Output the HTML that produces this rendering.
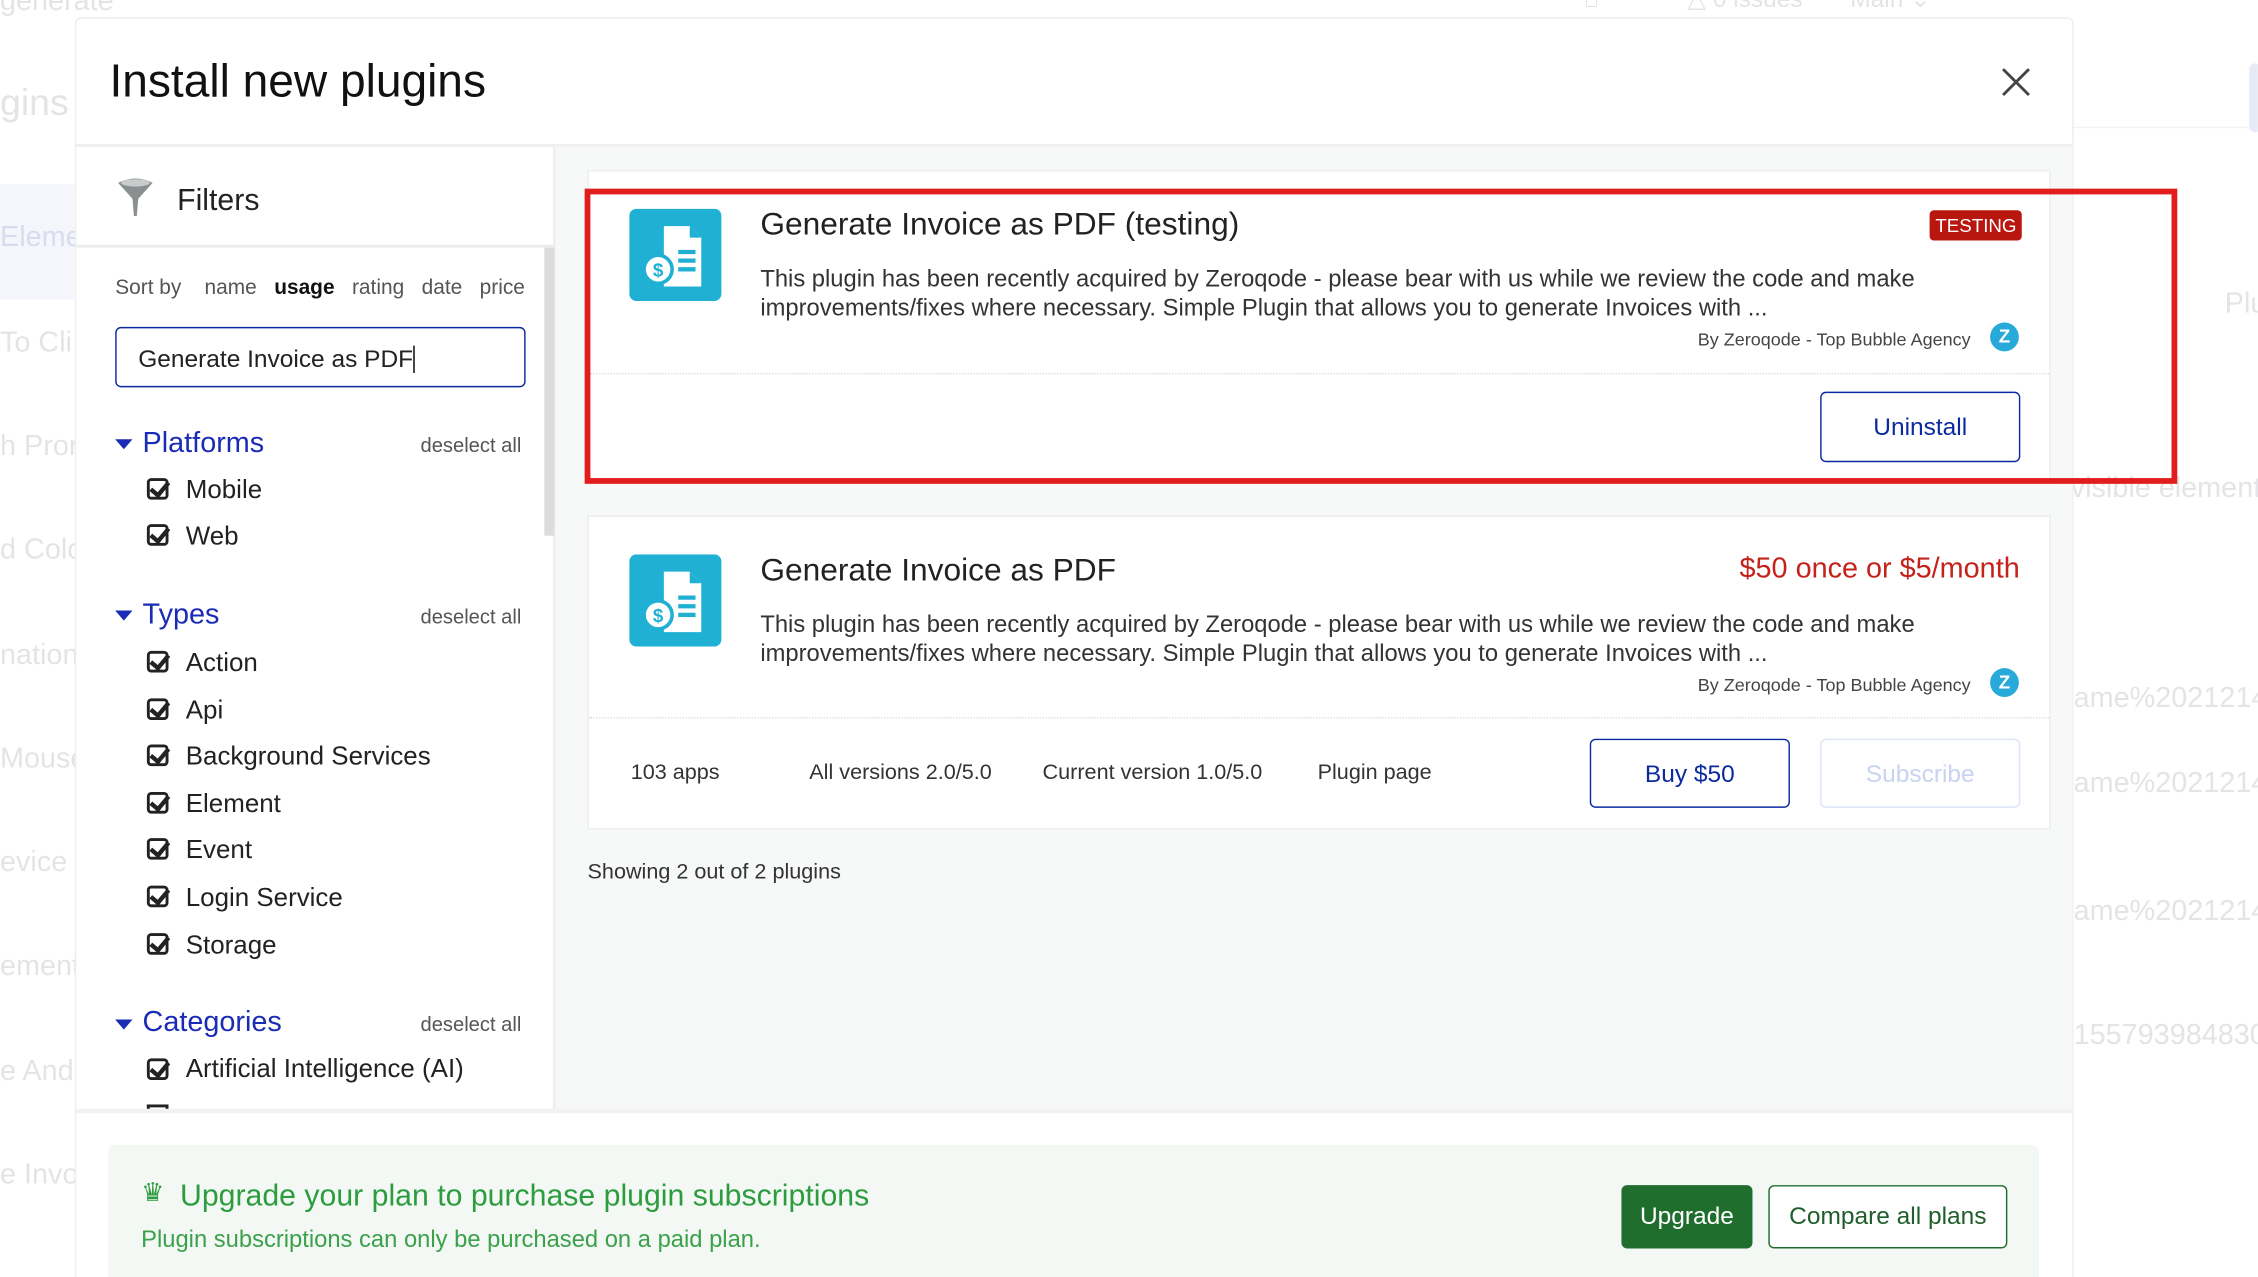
<!DOCTYPE html>
<html><head><meta charset="utf-8"><style>
*{box-sizing:border-box;margin:0;padding:0}
html,body{width:2258px;height:1276px;overflow:hidden;background:#fff;font-family:"Liberation Sans","DejaVu Sans",sans-serif}
#s{position:absolute;left:0;top:0;width:1568px;height:887px;transform:scale(1.44);transform-origin:0 0;overflow:hidden;background:#fff}
.a{position:absolute;white-space:nowrap}
.ghost{color:#e4e4e6;font-size:20px}
.chk{position:absolute;width:15px;height:15px;border:2px solid #222;border-radius:3px}
.chk:after{content:"";position:absolute;left:3px;top:-2px;width:5px;height:10px;border-right:3px solid #222;border-bottom:3px solid #222;transform:rotate(40deg)}
.it{font-size:18px;color:#222}
.sec{font-size:20px;color:#1a2bb5}
.tri{position:absolute;width:0;height:0;border-left:6px solid transparent;border-right:6px solid transparent;border-top:7px solid #1a2bb5}
.des{font-size:14px;color:#555}
.card{position:absolute;background:#fff;border:1px solid #eeeeee;left:408px;width:1016px}
.ttl{font-size:22px;color:#222}
.txt{font-size:16.5px;color:#333;line-height:20px}
.by{font-size:12.5px;color:#444}
.z{position:absolute;width:20px;height:20px;border-radius:50%;background:#27a9d9;color:#fff;font-size:13px;text-align:center;line-height:20px;font-weight:bold}
.btn{position:absolute;border:1.5px solid #0c2aa0;border-radius:4px;color:#0c2aa0;font-size:17px;text-align:center}
</style></head><body><div id="s">
<div class="a ghost" style="left:0;top:-10px">generate</div>
<div class="a ghost" style="left:0;top:56px;font-size:26px">gins</div>
<div style="position:absolute;left:0;top:128px;width:52px;height:80px;background:#f5f6fb"></div>
<div class="a ghost" style="left:0;top:154px;color:#d9dcef">Eleme</div>
<div class="a ghost" style="left:0;top:227px">To Cli</div>
<div class="a ghost" style="left:0;top:299px">h Pror</div>
<div class="a ghost" style="left:0;top:371px">d Colo</div>
<div class="a ghost" style="left:0;top:444px">nation</div>
<div class="a ghost" style="left:0;top:516px">Mouse</div>
<div class="a ghost" style="left:0;top:588px">evice</div>
<div class="a ghost" style="left:0;top:660px">ement</div>
<div class="a ghost" style="left:0;top:733px">e And</div>
<div class="a ghost" style="left:0;top:805px">e Invo</div>
<div class="a ghost" style="left:1100px;top:-10px;font-size:17px">⌂&nbsp;&nbsp;&nbsp;&nbsp;&nbsp;&nbsp;&nbsp;&nbsp;&nbsp;&nbsp;&nbsp;&nbsp;&nbsp;△ 0 issues&nbsp;&nbsp;&nbsp;&nbsp;&nbsp;&nbsp;&nbsp;Main ⌄</div>
<div style="position:absolute;left:1440px;top:88px;width:128px;height:1px;background:#f2f2f2"></div>
<div style="position:absolute;left:1562px;top:44px;width:8px;height:48px;background:#e8ebf5;border-radius:4px"></div>
<div class="a ghost" style="left:1545px;top:200px">Plu</div>
<div class="a ghost" style="left:1438px;top:328px">visible element</div>
<div class="a ghost" style="left:1440px;top:474px">ame%2021214</div>
<div class="a ghost" style="left:1440px;top:533px">ame%2021214</div>
<div class="a ghost" style="left:1440px;top:622px">ame%2021214</div>
<div class="a ghost" style="left:1440px;top:708px">1557939848307</div>

<div style="position:absolute;left:52px;top:12px;width:1388px;height:900px;background:#fff;border:1px solid #eee;border-radius:4px"></div>
<div class="a" style="left:76px;top:38px;font-size:32px;color:#111">Install new plugins</div>
<svg style="position:absolute;left:1389px;top:46px" width="22" height="22"><path d="M2 2L20 20M20 2L2 20" stroke="#444" stroke-width="2"/></svg>
<div style="position:absolute;left:53px;top:100px;width:1386px;height:2px;background:#efefef"></div>
<div style="position:absolute;left:386px;top:102px;width:1053px;height:670px;background:#f7f8f8"></div>
<div style="position:absolute;left:384px;top:102px;width:2px;height:670px;background:#efefef"></div>
<div style="position:absolute;left:53px;top:770px;width:1386px;height:3px;background:#f2f2f2"></div>
<svg style="position:absolute;left:81px;top:123px" width="26" height="28"><path d="M1 4Q13 -2 25 4L15 15L14 27L12 27L11 15Z" fill="#8a8f90"/><ellipse cx="13" cy="4" rx="10" ry="2.5" fill="#c9cccc"/></svg>
<div class="a" style="left:123px;top:128px;font-size:21px;color:#222">Filters</div>
<div style="position:absolute;left:53px;top:170px;width:332px;height:2px;background:#ececec"></div>
<div style="position:absolute;left:378px;top:172px;width:7px;height:200px;background:#dcdcdc"></div>
<div class="a" style="left:80px;top:192px;font-size:14.5px;color:#555">Sort by&nbsp;&nbsp;&nbsp;&nbsp;name&nbsp;&nbsp;&nbsp;<b style="color:#111">usage</b>&nbsp;&nbsp;&nbsp;rating&nbsp;&nbsp;&nbsp;date&nbsp;&nbsp;&nbsp;price</div>
<div style="position:absolute;left:80px;top:227px;width:285px;height:42px;border:1.5px solid #0c2aa0;border-radius:4px"></div>
<div class="a" style="left:96px;top:240px;font-size:17px;color:#222">Generate Invoice as PDF<span style="border-left:1px solid #000"> </span></div>

<div class="tri" style="left:80px;top:305px"></div><div class="a sec" style="left:99px;top:297px">Platforms</div><div class="a des" style="left:292px;top:301px">deselect all</div>
<div class="chk" style="left:102px;top:332px"></div><div class="a it" style="left:129px;top:330px">Mobile</div>
<div class="chk" style="left:102px;top:364px"></div><div class="a it" style="left:129px;top:362px">Web</div>

<div class="tri" style="left:80px;top:424px"></div><div class="a sec" style="left:99px;top:416px">Types</div><div class="a des" style="left:292px;top:420px">deselect all</div>
<div class="chk" style="left:102px;top:452px"></div><div class="a it" style="left:129px;top:450px">Action</div>
<div class="chk" style="left:102px;top:485px"></div><div class="a it" style="left:129px;top:483px">Api</div>
<div class="chk" style="left:102px;top:517px"></div><div class="a it" style="left:129px;top:515px">Background Services</div>
<div class="chk" style="left:102px;top:550px"></div><div class="a it" style="left:129px;top:548px">Element</div>
<div class="chk" style="left:102px;top:582px"></div><div class="a it" style="left:129px;top:580px">Event</div>
<div class="chk" style="left:102px;top:615px"></div><div class="a it" style="left:129px;top:613px">Login Service</div>
<div class="chk" style="left:102px;top:648px"></div><div class="a it" style="left:129px;top:646px">Storage</div>

<div class="tri" style="left:80px;top:708px"></div><div class="a sec" style="left:99px;top:699px">Categories</div><div class="a des" style="left:292px;top:703px">deselect all</div>
<div class="chk" style="left:102px;top:735px"></div><div class="a it" style="left:129px;top:732px">Artificial Intelligence (AI)</div>
<div style="position:absolute;left:102px;top:767px;width:15px;height:3px;border:2px solid #222;border-bottom:none"></div>

<div class="card" style="top:118px;height:218px"></div>
<div style="position:absolute;left:409px;top:259px;width:1014px;border-top:1px dotted #ddd"></div>
<div class="card" style="top:358px;height:218px"></div>
<div style="position:absolute;left:409px;top:498px;width:1014px;border-top:1px dotted #ddd"></div>

<svg style="position:absolute;left:437px;top:145px" width="64" height="64" viewBox="0 0 64 64"><rect width="64" height="64" rx="5" fill="#1fb0d4"/><path d="M24 12H42L50 20V54H24Z" fill="#fff"/><path d="M42 12V20H50" fill="#1fb0d4"/><path d="M34 30H46M34 36H46M34 42H46" stroke="#1fb0d4" stroke-width="3"/><circle cx="20" cy="42" r="11" fill="#1fb0d4"/><circle cx="20" cy="42" r="8.5" fill="#fff"/><text x="20" y="47" font-size="13" font-weight="bold" text-anchor="middle" fill="#1fb0d4" font-family="Liberation Sans">$</text></svg>
<svg style="position:absolute;left:437px;top:385px" width="64" height="64" viewBox="0 0 64 64"><rect width="64" height="64" rx="5" fill="#1fb0d4"/><path d="M24 12H42L50 20V54H24Z" fill="#fff"/><path d="M42 12V20H50" fill="#1fb0d4"/><path d="M34 30H46M34 36H46M34 42H46" stroke="#1fb0d4" stroke-width="3"/><circle cx="20" cy="42" r="11" fill="#1fb0d4"/><circle cx="20" cy="42" r="8.5" fill="#fff"/><text x="20" y="47" font-size="13" font-weight="bold" text-anchor="middle" fill="#1fb0d4" font-family="Liberation Sans">$</text></svg>

<div class="a ttl" style="left:528px;top:143px">Generate Invoice as PDF (testing)</div>
<div class="a" style="left:1340px;top:146px;background:#b8160f;color:#fff;font-size:13px;padding:3px 4px;border-radius:3px">TESTING</div>
<div class="a txt" style="left:528px;top:184px">This plugin has been recently acquired by Zeroqode - please bear with us while we review the code and make<br>improvements/fixes where necessary. Simple Plugin that allows you to generate Invoices with ...</div>
<div class="a by" style="left:1179px;top:229px">By Zeroqode - Top Bubble Agency</div><div class="z" style="left:1382px;top:224px">Z</div>
<div class="btn" style="left:1264px;top:272px;width:139px;height:49px;line-height:48px">Uninstall</div>

<div class="a ttl" style="left:528px;top:383px">Generate Invoice as PDF</div>
<div class="a" style="left:1208px;top:384px;font-size:20px;color:#c4221b">$50 once or $5/month</div>
<div class="a txt" style="left:528px;top:424px">This plugin has been recently acquired by Zeroqode - please bear with us while we review the code and make<br>improvements/fixes where necessary. Simple Plugin that allows you to generate Invoices with ...</div>
<div class="a by" style="left:1179px;top:469px">By Zeroqode - Top Bubble Agency</div><div class="z" style="left:1382px;top:464px">Z</div>
<div class="a" style="left:438px;top:528px;font-size:15px;color:#333">103 apps</div>
<div class="a" style="left:562px;top:528px;font-size:15px;color:#333">All versions 2.0/5.0</div>
<div class="a" style="left:724px;top:528px;font-size:15px;color:#333">Current version 1.0/5.0</div>
<div class="a" style="left:915px;top:528px;font-size:15px;color:#333">Plugin page</div>
<div class="btn" style="left:1104px;top:513px;width:139px;height:48px;line-height:48px">Buy $50</div>
<div class="btn" style="left:1264px;top:513px;width:139px;height:48px;line-height:48px;border-color:#dde4f6;color:#c8d3f1">Subscribe</div>

<div class="a" style="left:408px;top:597px;font-size:15px;color:#333">Showing 2 out of 2 plugins</div>

<div style="position:absolute;left:75px;top:795px;width:1341px;height:100px;background:#f3f8f4;border-radius:5px"></div>
<div class="a" style="left:98px;top:818px;font-size:18px;color:#2d9c3f">♛</div>
<div class="a" style="left:125px;top:819px;font-size:21px;color:#2d9c3f">Upgrade your plan to purchase plugin subscriptions</div>
<div class="a" style="left:98px;top:852px;font-size:16.5px;color:#3ba14a">Plugin subscriptions can only be purchased on a paid plan.</div>
<div class="a" style="left:1126px;top:823px;width:91px;height:44px;background:#1f6e2e;border-radius:4px;color:#fff;font-size:17px;text-align:center;line-height:44px">Upgrade</div>
<div class="a" style="left:1228px;top:823px;width:166px;height:44px;border:1.5px solid #1f6e2e;border-radius:4px;color:#1f5e2a;font-size:17px;text-align:center;line-height:41px;background:#fff">Compare all plans</div>

<div style="position:absolute;left:406px;top:131px;width:1106px;height:205px;border:4px solid #e21d1d"></div>
</div></body></html>
